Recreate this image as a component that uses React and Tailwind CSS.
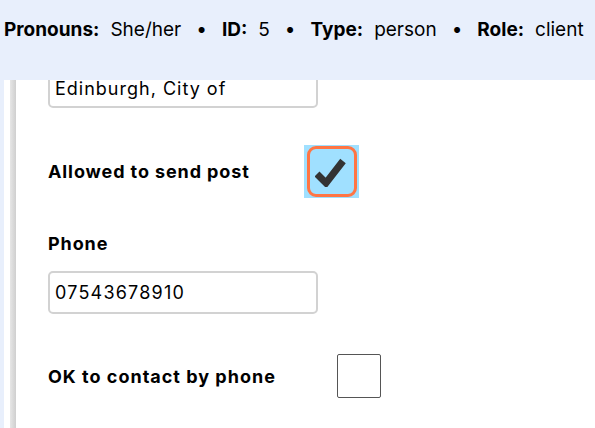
const Sep = () => <span className="mx-[15px]">•</span>

const App = () => {
  return (
    <div className="w-[595px] h-[428px] overflow-hidden bg-[#e8effc] font-['Inter',sans-serif] text-black relative">
      <div className="flex flex-col h-full">
        <div className="relative z-10 bg-[#e8effc] h-[80px] shrink-0 pl-[4px] pt-[16px] text-[19px] whitespace-nowrap flex">
          <span className="font-bold">Pronouns:</span>
          <span className="ml-[11px]">She/her</span>
          <Sep />
          <span className="font-bold">ID:</span>
          <span className="ml-[11px]">5</span>
          <Sep />
          <span className="font-bold">Type:</span>
          <span className="ml-[11px]">person</span>
          <Sep />
          <span className="font-bold">Role:</span>
          <span className="ml-[11px]">client</span>
        </div>
        <div className="flex-1 ml-[4px] bg-white flex">
          <div className="w-[6px]" />
          <div className="w-[6px] bg-gradient-to-r from-[#e6e6e6] to-[#cfcfcf]" />
          <div className="flex-1 pl-[32px]">
            <div className="-mt-[15px] w-[270px] h-[43px] border-2 border-[#d2d2d2] rounded-[5px] px-[5px] pt-[8px] text-[18px] tracking-[1px] bg-white overflow-hidden">
              Edinburgh, City of
            </div>
            <div className="flex items-center mt-[37px] h-[53px]">
              <span className="w-[256px] font-bold text-[18px] tracking-[0.9px]">Allowed to send post</span>
              <div className="w-[55px] h-[53px] bg-[#a0e0ff] flex items-center justify-center">
                <div className="w-[50px] h-[51px] border-[3px] border-[#ff7544] rounded-[9px] flex items-center justify-center">
                  <svg width="34" height="30" viewBox="0 0 34 30">
                    <path d="M2 17 L11 26 L28 4" fill="none" stroke="#333" strokeWidth="7" strokeLinejoin="miter" />
                  </svg>
                </div>
              </div>
            </div>
            <div className="mt-[32px] font-bold text-[18px] tracking-[0.9px]">Phone</div>
            <div className="mt-[14px] w-[270px] h-[43px] border-2 border-[#d2d2d2] rounded-[5px] px-[5px] flex items-center text-[18px] tracking-[1.2px]">
              07543678910
            </div>
            <div className="flex items-center mt-[40px]">
              <span className="w-[289px] font-bold text-[18px] tracking-[1px]">OK to contact by phone</span>
              <div className="w-[44px] h-[44px] border border-[#555] rounded-[2px]" />
            </div>
          </div>
        </div>
      </div>
    </div>
  )
}

export default App
